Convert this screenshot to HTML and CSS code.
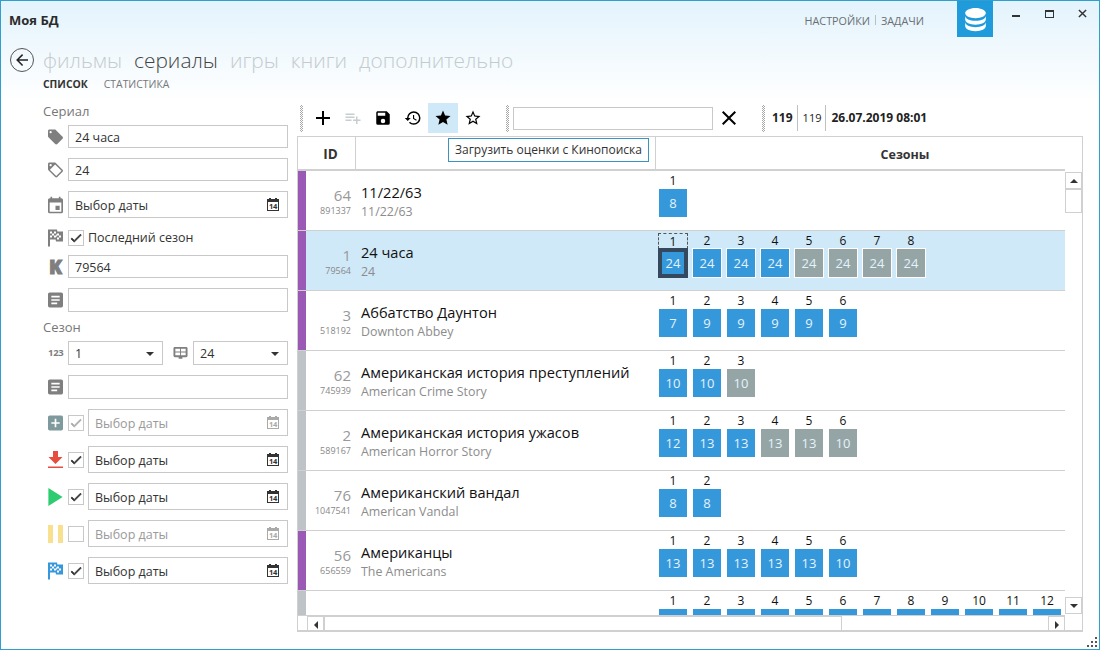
FILE: index.html
```html
<!DOCTYPE html>
<html lang="ru">
  <head>
    <meta charset="UTF-8" />
    <title>Моя БД</title>
    <link rel="stylesheet" href="styles.css">
  </head>
  <body>
    <svg class="defs" width="0" height="0">
      <symbol id="i-plus" viewBox="0 0 24 24"><path d="M19,13H13V19H11V13H5V11H11V5H13V11H19V13Z" /></symbol>
      <symbol id="i-listadd" viewBox="0 0 24 24"><path d="M14,10H2V12H14V10M14,6H2V8H14V6M18,14V10H16V14H12V16H16V20H18V16H22V14H18M2,16H10V14H2V16Z" /></symbol>
      <symbol id="i-save" viewBox="0 0 24 24"><path d="M15,9H5V5H15M12,19A3,3 0 0,1 9,16A3,3 0 0,1 12,13A3,3 0 0,1 15,16A3,3 0 0,1 12,19M17,3H5C3.89,3 3,3.9 3,5V19A2,2 0 0,0 5,21H19A2,2 0 0,0 21,19V7L17,3Z" /></symbol>
      <symbol id="i-history" viewBox="0 0 24 24"><path d="M13.5,8H12V13L16.28,15.54L17,14.33L13.5,12.25V8M13,3A9,9 0 0,0 4,12H1L4.96,16.03L9,12H6A7,7 0 0,1 13,5A7,7 0 0,1 20,12A7,7 0 0,1 13,19C11.07,19 9.32,18.21 8.06,16.94L6.64,18.36C8.27,20 10.5,21 13,21A9,9 0 0,0 22,12A9,9 0 0,0 13,3" /></symbol>
      <symbol id="i-star" viewBox="0 0 24 24"><path d="M12,17.27L18.18,21L16.54,13.97L22,9.24L14.81,8.62L12,2L9.19,8.62L2,9.24L7.45,13.97L5.82,21L12,17.27Z" /></symbol>
      <symbol id="i-starline" viewBox="0 0 24 24"><path d="M12,15.39L8.24,17.66L9.23,13.38L5.91,10.5L10.29,10.13L12,6.09L13.71,10.13L18.09,10.5L14.77,13.38L15.76,17.66M22,9.24L14.81,8.62L12,2L9.19,8.62L2,9.24L7.45,13.97L5.82,21L12,17.27L18.18,21L16.54,13.97L22,9.24Z" /></symbol>
      <symbol id="i-close" viewBox="0 0 24 24"><path d="M19,6.41L17.59,5L12,10.59L6.41,5L5,6.41L10.59,12L5,17.59L6.41,19L12,13.41L17.59,19L19,17.59L13.41,12L19,6.41Z" /></symbol>
      <symbol id="i-tag" viewBox="2 2 20 20"><path d="M5.5,7A1.5,1.5 0 0,1 4,5.5A1.5,1.5 0 0,1 5.5,4A1.5,1.5 0 0,1 7,5.5A1.5,1.5 0 0,1 5.5,7M21.41,11.58L12.41,2.58C12.05,2.22 11.55,2 11,2H4C2.89,2 2,2.89 2,4V11C2,11.55 2.22,12.05 2.59,12.41L11.58,21.41C11.95,21.77 12.45,22 13,22C13.55,22 14.05,21.77 14.41,21.41L21.41,14.41C21.78,14.05 22,13.55 22,13C22,12.44 21.77,11.94 21.41,11.58Z" /></symbol>
      <symbol id="i-tagline" viewBox="2 2 20 20"><path d="M5.5,7A1.5,1.5 0 0,0 7,5.5A1.5,1.5 0 0,0 5.5,4A1.5,1.5 0 0,0 4,5.5A1.5,1.5 0 0,0 5.5,7M21.41,11.58C21.77,11.94 22,12.44 22,13C22,13.55 21.78,14.05 21.41,14.41L14.41,21.41C14.05,21.77 13.55,22 13,22C12.45,22 11.95,21.77 11.58,21.41L2.59,12.42C2.22,12.05 2,11.55 2,11V4C2,2.89 2.89,2 4,2H11C11.55,2 12.05,2.22 12.41,2.58L21.41,11.58M13,20L20,13L11.5,4.5L4.5,11.5L13,20Z" /></symbol>
      <symbol id="i-calendar" viewBox="3 1 18 20"><path d="M19,19H5V8H19M16,1V3H8V1H6V3H5C3.89,3 3,3.89 3,5V19A2,2 0 0,0 5,21H19A2,2 0 0,0 21,19V5C21,3.89 20.1,3 19,3H18V1M17,12H12V17H17V12Z" /></symbol>
      <symbol id="i-note" viewBox="3 3 18 18"><path d="M14,17H7V15H14M17,13H7V11H17M17,9H7V7H17M19,3H5C3.89,3 3,3.89 3,5V19A2,2 0 0,0 5,21H19A2,2 0 0,0 21,19V5C21,3.89 20.1,3 19,3Z" /></symbol>
      <symbol id="i-plusbox" viewBox="3 3 18 18"><path d="M17,13H13V17H11V13H7V11H11V7H13V11H17M19,3H5C3.89,3 3,3.89 3,5V19A2,2 0 0,0 5,21H19A2,2 0 0,0 21,19V5C21,3.89 20.1,3 19,3Z" /></symbol>
      <symbol id="i-flag" viewBox="5 4 15 17"><path d="M14.4,6H20V16H13L12.6,14H7V21H5V4H14L14.4,6M14,14H16V12H18V10H16V8H14V10L13,8V6H11V8H9V6H7V8H9V10H7V12H9V10H11V12H13V10L14,12V14M11,10V8H13V10H11M14,10H16V12H14V10Z" /></symbol>
      <symbol id="i-check" viewBox="0 0 24 24"><path d="M21,7L9,19L3.5,13.5L4.91,12.09L9,16.17L19.59,5.59L21,7Z" /></symbol>
    </svg>

    <div class="window">
      <header class="titlebar">
        <div class="app-title">Моя БД</div>
        <div class="top-links"><span>НАСТРОЙКИ</span><i></i><span>ЗАДАЧИ</span></div>
        <div class="db-tile">
          <svg viewBox="0 0 24 24"><path d="M12,3C7.58,3 4,4.79 4,7C4,9.21 7.58,11 12,11C16.42,11 20,9.21 20,7C20,4.79 16.42,3 12,3M4,9V12C4,14.21 7.58,16 12,16C16.42,16 20,14.21 20,12V9C20,11.21 16.42,13 12,13C7.58,13 4,11.21 4,9M4,14V17C4,19.21 7.58,21 12,21C16.42,21 20,19.21 20,17V14C20,16.21 16.42,18 12,18C7.58,18 4,16.21 4,14Z" /></svg>
        </div>
        <div class="win-controls">
          <span class="win-min"></span>
          <span class="win-max"></span>
          <svg class="win-close" viewBox="0 0 10 10"><path d="M1 1L9 9M9 1L1 9" /></svg>
        </div>
      </header>

      <nav class="main-nav">
        <div class="back-btn">
          <svg viewBox="0 0 24 24"><path d="M20,11V13H8L13.5,18.5L12.08,19.92L4.16,12L12.08,4.08L13.5,5.5L8,11H20Z" /></svg>
        </div>
        <a>фильмы</a>
        <a class="active">сериалы</a>
        <a>игры</a>
        <a>книги</a>
        <a>дополнительно</a>
      </nav>
      <div class="sub-nav">
        <a class="active">СПИСОК</a>
        <a>СТАТИСТИКА</a>
      </div>

      <div class="content">
        <aside class="sidebar">
          <div class="group-title">Сериал</div>
          <div class="form-row h23">
            <svg class="icon gray"><use href="#i-tag" /></svg>
            <div class="field">24 часа</div>
          </div>
          <div class="form-row h23">
            <svg class="icon gray"><use href="#i-tagline" /></svg>
            <div class="field">24</div>
          </div>
          <div class="form-row h27">
            <svg class="icon gray"><use href="#i-calendar" /></svg>
            <div class="field date">Выбор даты<span class="cal">14</span></div>
          </div>
          <div class="form-row h15 last-season">
            <svg class="icon gray"><use href="#i-flag" /></svg>
            <div class="check on"><svg><use href="#i-check" /></svg></div>
            <span class="check-label">Последний сезон</span>
          </div>
          <div class="form-row h23">
            <span class="icon kp">K</span>
            <div class="field">79564</div>
          </div>
          <div class="form-row h24">
            <svg class="icon gray"><use href="#i-note" /></svg>
            <div class="field"></div>
          </div>

          <div class="group-title second">Сезон</div>
          <div class="form-row h24">
            <span class="icon num">123</span>
            <div class="field select">1<i class="caret"></i></div>
            <svg class="icon gray screen" viewBox="0 0 16 15"><path d="M2 1h12a1.500 1.500 0 0 1 1.500 1.500v8A1.500 1.500 0 0 1 14 12H10v1.500H6V12H2A1.500 1.500 0 0 1 .5 10.500v-8A1.500 1.500 0 0 1 2 1ZM2.500 3v3h5V3ZM8.500 3v3h5V3ZM2.500 7v3h5V7ZM8.500 7v3h5V7Z" /></svg>
            <div class="field select">24<i class="caret"></i></div>
          </div>
          <div class="form-row h24">
            <svg class="icon gray"><use href="#i-note" /></svg>
            <div class="field"></div>
          </div>
          <div class="form-row h27 faded">
            <svg class="icon slate"><use href="#i-plusbox" /></svg>
            <div class="check on"><svg><use href="#i-check" /></svg></div>
            <div class="field date">Выбор даты<span class="cal">14</span></div>
          </div>
          <div class="form-row h27">
            <svg class="icon red" viewBox="0 0 15 18"><path d="M5 0h5v6h4.500L7.500 13 .5 6H5ZM0 15.500h15V17H0Z" /></svg>
            <div class="check on"><svg><use href="#i-check" /></svg></div>
            <div class="field date">Выбор даты<span class="cal">14</span></div>
          </div>
          <div class="form-row h27">
            <svg class="icon green" viewBox="0 0 15 19"><path d="M0 0L15 9.500 0 19Z" /></svg>
            <div class="check on"><svg><use href="#i-check" /></svg></div>
            <div class="field date">Выбор даты<span class="cal">14</span></div>
          </div>
          <div class="form-row h27 faded">
            <svg class="icon yellow" viewBox="0 0 15 18"><path d="M0 0h5v18H0ZM10 0h5v18h-5Z" /></svg>
            <div class="check"></div>
            <div class="field date">Выбор даты<span class="cal">14</span></div>
          </div>
          <div class="form-row h27">
            <svg class="icon blue"><use href="#i-flag" /></svg>
            <div class="check on"><svg><use href="#i-check" /></svg></div>
            <div class="field date">Выбор даты<span class="cal">14</span></div>
          </div>
        </aside>

        <main class="list-area">
          <div class="toolbar">
            <i class="grip"></i>
            <div class="tool"><svg class="big"><use href="#i-plus" /></svg></div>
            <div class="tool muted"><svg><use href="#i-listadd" /></svg></div>
            <div class="tool"><svg><use href="#i-save" /></svg></div>
            <div class="tool"><svg><use href="#i-history" /></svg></div>
            <div class="tool hot"><svg><use href="#i-star" /></svg></div>
            <div class="tool"><svg><use href="#i-starline" /></svg></div>
            <i class="grip gap-left"></i>
            <div class="search"></div>
            <div class="tool clear"><svg class="big"><use href="#i-close" /></svg></div>
            <i class="grip gap-left2"></i>
            <b class="stat first">119</b>
            <span class="stat small">119</span>
            <b class="stat">26.07.2019 08:01</b>
          </div>
          <div class="tooltip">Загрузить оценки с Кинопоиска</div>

          <div class="grid">
            <div class="grid-head">
              <div class="col-id">ID</div>
              <div class="col-name"></div>
              <div class="col-seasons">Сезоны</div>
            </div>
            <div class="grid-middle">
              <div class="rows">
                <div class="row">
                  <i class="bar purple"></i>
                  <div class="ids"><span>64</span><small>891337</small></div>
                  <div class="names"><div>11/22/63</div><small>11/22/63</small></div>
                  <div class="seasons">
                    <div class="season"><span>1</span><b>8</b></div>
                  </div>
                </div>
                <div class="row selected">
                  <i class="bar purple"></i>
                  <div class="ids"><span>1</span><small>79564</small></div>
                  <div class="names"><div>24 часа</div><small>24</small></div>
                  <div class="seasons">
                    <div class="season current"><span>1</span><b>24</b></div>
                    <div class="season"><span>2</span><b>24</b></div>
                    <div class="season"><span>3</span><b>24</b></div>
                    <div class="season"><span>4</span><b>24</b></div>
                    <div class="season off"><span>5</span><b>24</b></div>
                    <div class="season off"><span>6</span><b>24</b></div>
                    <div class="season off"><span>7</span><b>24</b></div>
                    <div class="season off"><span>8</span><b>24</b></div>
                  </div>
                </div>
                <div class="row">
                  <i class="bar purple"></i>
                  <div class="ids"><span>3</span><small>518192</small></div>
                  <div class="names"><div>Аббатство Даунтон</div><small>Downton Abbey</small></div>
                  <div class="seasons">
                    <div class="season"><span>1</span><b>7</b></div>
                    <div class="season"><span>2</span><b>9</b></div>
                    <div class="season"><span>3</span><b>9</b></div>
                    <div class="season"><span>4</span><b>9</b></div>
                    <div class="season"><span>5</span><b>9</b></div>
                    <div class="season"><span>6</span><b>9</b></div>
                  </div>
                </div>
                <div class="row">
                  <i class="bar silver"></i>
                  <div class="ids"><span>62</span><small>745939</small></div>
                  <div class="names"><div>Американская история преступлений</div><small>American Crime Story</small></div>
                  <div class="seasons">
                    <div class="season"><span>1</span><b>10</b></div>
                    <div class="season"><span>2</span><b>10</b></div>
                    <div class="season off"><span>3</span><b>10</b></div>
                  </div>
                </div>
                <div class="row">
                  <i class="bar silver"></i>
                  <div class="ids"><span>2</span><small>589167</small></div>
                  <div class="names"><div>Американская история ужасов</div><small>American Horror Story</small></div>
                  <div class="seasons">
                    <div class="season"><span>1</span><b>12</b></div>
                    <div class="season"><span>2</span><b>13</b></div>
                    <div class="season"><span>3</span><b>13</b></div>
                    <div class="season off"><span>4</span><b>13</b></div>
                    <div class="season off"><span>5</span><b>13</b></div>
                    <div class="season off"><span>6</span><b>10</b></div>
                  </div>
                </div>
                <div class="row">
                  <i class="bar silver"></i>
                  <div class="ids"><span>76</span><small>1047541</small></div>
                  <div class="names"><div>Американский вандал</div><small>American Vandal</small></div>
                  <div class="seasons">
                    <div class="season"><span>1</span><b>8</b></div>
                    <div class="season"><span>2</span><b>8</b></div>
                  </div>
                </div>
                <div class="row">
                  <i class="bar purple"></i>
                  <div class="ids"><span>56</span><small>656559</small></div>
                  <div class="names"><div>Американцы</div><small>The Americans</small></div>
                  <div class="seasons">
                    <div class="season"><span>1</span><b>13</b></div>
                    <div class="season"><span>2</span><b>13</b></div>
                    <div class="season"><span>3</span><b>13</b></div>
                    <div class="season"><span>4</span><b>13</b></div>
                    <div class="season"><span>5</span><b>13</b></div>
                    <div class="season"><span>6</span><b>10</b></div>
                  </div>
                </div>
                <div class="row">
                  <i class="bar silver"></i>
                  <div class="ids"></div>
                  <div class="names"></div>
                  <div class="seasons">
                    <div class="season"><span>1</span><b></b></div>
                    <div class="season"><span>2</span><b></b></div>
                    <div class="season"><span>3</span><b></b></div>
                    <div class="season"><span>4</span><b></b></div>
                    <div class="season"><span>5</span><b></b></div>
                    <div class="season"><span>6</span><b></b></div>
                    <div class="season"><span>7</span><b></b></div>
                    <div class="season"><span>8</span><b></b></div>
                    <div class="season"><span>9</span><b></b></div>
                    <div class="season"><span>10</span><b></b></div>
                    <div class="season"><span>11</span><b></b></div>
                    <div class="season"><span>12</span><b></b></div>
                  </div>
                </div>
              </div>
              <div class="vscroll">
                <div class="sb-btn"><i class="tri up"></i></div>
                <div class="sb-thumb"></div>
                <div class="sb-fill"></div>
                <div class="sb-btn"><i class="tri down"></i></div>
              </div>
            </div>
            <div class="hscroll">
              <div class="sb-btn"><i class="tri left"></i></div>
              <div class="sb-thumb"></div>
              <div class="sb-fill"></div>
              <div class="sb-btn"><i class="tri right"></i></div>
            </div>
          </div>
        </main>
      </div>
      <svg class="resize-grip" viewBox="0 0 12 12"><path d="M9 1h2v2H9ZM5 5h2v2H5ZM9 5h2v2H9ZM1 9h2v2H1ZM5 9h2v2H5ZM9 9h2v2H9Z" /></svg>
    </div>
  </body>
</html>
```

FILE: styles.css
```css
* {
  box-sizing: border-box;
  margin: 0;
  padding: 0;
}

html,
body {
  width: 1100px;
  height: 650px;
  overflow: hidden;
}

body {
  font-family: "Open Sans", "Noto Sans", sans-serif;
  font-size: 12px;
  color: #222;
  background: #fff;
}

.defs {
  position: absolute;
}

.window {
  position: relative;
  width: 1100px;
  height: 650px;
  border: 1px solid #2f9fd0;
  background: linear-gradient(180deg, #e3f3fc 0, #ffffff 100px);
  overflow: hidden;
}

/* title bar */
.titlebar {
  display: flex;
  align-items: flex-start;
  height: 36px;
  padding-left: 8px;
}

.app-title {
  height: 36px;
  padding-top: 1px;
  font-size: 13px;
  font-weight: 700;
  color: #2b2b2b;
  line-height: 36px;
  flex: 1;
}

.top-links {
  display: flex;
  align-items: center;
  height: 38px;
  font-size: 10.800px;
  color: #6a6f73;
}

.top-links i {
  width: 1px;
  height: 10px;
  margin: 0 5px;
  background: #b9c0c4;
}

.db-tile {
  width: 36px;
  height: 36px;
  margin-left: 33px;
  background: #1f9bdc;
  display: flex;
  align-items: center;
  justify-content: center;
}

.db-tile svg {
  width: 31px;
  height: 31px;
  fill: #fff;
}

.win-controls {
  display: flex;
  align-items: center;
  width: 106px;
  height: 25px;
  padding-left: 19px;
}

.win-min {
  width: 8px;
  height: 2px;
  margin-top: 4px;
  background: #333;
}

.win-max {
  width: 9px;
  height: 8px;
  margin-left: 25px;
  border: 1px solid #333;
  border-top-width: 2px;
}

.win-close {
  width: 9px;
  height: 9px;
  margin-left: 24px;
  stroke: #333;
  stroke-width: 1.600;
  fill: none;
}

/* section navigation */
.main-nav {
  display: flex;
  align-items: center;
  height: 30px;
  margin-top: 8px;
  padding-left: 9px;
  font-size: 20.900px;
  font-weight: 300;
  color: #c3cbce;
}

.main-nav a {
  margin-right: 12px;
}

.main-nav a.active {
  color: #444;
}

.back-btn {
  width: 24px;
  height: 24px;
  margin-right: 9px;
  border: 1px solid #555;
  border-radius: 50%;
  display: flex;
  align-items: center;
  justify-content: center;
}

.back-btn svg {
  width: 18px;
  height: 18px;
  fill: #222;
}

.sub-nav {
  display: flex;
  gap: 16px;
  height: 20px;
  padding-left: 42px;
  font-size: 10.400px;
  line-height: 18px;
  color: #777;
}

.sub-nav .active {
  font-weight: 700;
  color: #333;
}

.content {
  display: flex;
  height: 546px;
  padding-top: 8px;
}

/* left form */
.sidebar {
  width: 296px;
  flex: none;
  padding-left: 42px;
  display: flex;
  flex-direction: column;
  gap: 10px;
}

.group-title {
  height: 12px;
  margin-top: 2px;
  margin-bottom: -2px;
  font-size: 13px;
  line-height: 12px;
  color: #777;
}

.group-title.second {
  margin-top: -1px;
  margin-bottom: -2px;
}

.form-row {
  display: flex;
  align-items: center;
  width: 245px;
  padding-left: 5px;
}

.last-season {
  margin-top: 2px;
}

.h15 { height: 15px; }
.h23 { height: 23px; }
.h24 { height: 24px; }
.h27 { height: 27px; }

.icon {
  width: 15px;
  height: 18px;
  flex: none;
  margin-right: 5px;
  overflow: visible;
}

.icon.gray { fill: #7f7f7f; }
.icon.slate { fill: #7f9a9c; }
.icon.red { fill: #e74c3c; }
.icon.green { fill: #2ecc71; }
.icon.yellow { fill: #f9e08f; }
.icon.blue { fill: #3498db; }

.kp {
  font-size: 19px;
  font-weight: 800;
  line-height: 18px;
  color: #7f7f7f;
  text-align: center;
  -webkit-text-stroke: 1px #7f7f7f;
}

.num {
  font-size: 9.500px;
  font-weight: 700;
  line-height: 18px;
  color: #7f7f7f;
  letter-spacing: -0.300px;
}

.icon.screen {
  margin: 0 5px 0 10px;
}

.field {
  flex: 1;
  height: 100%;
  display: flex;
  align-items: center;
  justify-content: space-between;
  padding: 1px 6px 0;
  border: 1px solid #c8c8c8;
  background: #fff;
  font-size: 12.500px;
  color: #333;
}

/* small tear-off calendar on date inputs */
.cal {
  position: relative;
  width: 12px;
  height: 12px;
  margin-right: 2px;
  border: 1px solid #333;
  border-top-width: 3px;
  font-size: 7.500px;
  font-weight: 700;
  line-height: 9px;
  text-align: center;
  letter-spacing: -0.300px;
  color: #333;
}

.cal::before,
.cal::after {
  content: "";
  position: absolute;
  top: -4px;
  width: 2px;
  height: 2px;
  background: #333;
}

.cal::before { left: 1px; }
.cal::after { right: 1px; }

.field.select {
  width: 95px;
  flex: none;
  padding-right: 8px;
}

.caret {
  width: 0;
  height: 0;
  border-left: 4px solid transparent;
  border-right: 4px solid transparent;
  border-top: 4px solid #333;
}

.check {
  width: 16px;
  height: 16px;
  flex: none;
  margin-right: 4px;
  border: 1px solid #c8c8c8;
  background: #fff;
  display: flex;
  align-items: center;
  justify-content: center;
}

.check svg {
  width: 14px;
  height: 14px;
  fill: #333;
  stroke: #333;
  stroke-width: 1.500;
}

.check-label {
  font-size: 12.500px;
  color: #333;
}

.faded .check svg {
  fill: #aaa;
  stroke: #aaa;
}

.faded .field {
  color: #9a9a9a;
}

.faded .cal {
  color: #aaa;
  border-color: #aaa;
}

.faded .cal::before,
.faded .cal::after {
  background: #aaa;
}

/* list side */
.list-area {
  position: relative;
  width: 787px;
  flex: none;
}

.toolbar {
  display: flex;
  align-items: center;
  height: 30px;
  padding-left: 3px;
}

.grip {
  width: 3px;
  height: 27px;
  flex: none;
  margin-right: 5px;
  background: repeating-conic-gradient(#a8a8a8 0 25%, #fff 0 50%) 0 0 / 2px 2px;
}

.grip.gap-left {
  margin-left: 18px;
  margin-right: 4px;
}

.grip.gap-left2 {
  margin-left: 18px;
  margin-right: 7px;
}

.tool {
  width: 30px;
  height: 30px;
  flex: none;
  display: flex;
  align-items: center;
  justify-content: center;
}

.tool svg {
  width: 18px;
  height: 18px;
  fill: #000;
}

.tool svg.big {
  width: 24px;
  height: 24px;
}

.tool.muted svg {
  fill: #c8cdd0;
}

.tool.hot {
  background: #cfe9f8;
}

.search {
  width: 200px;
  height: 23px;
  flex: none;
  border: 1px solid #c8c8c8;
  background: #fff;
}

.tool.clear {
  margin-left: 1px;
}

.stat {
  padding: 0 5px;
  line-height: 26px;
  border-left: 1px solid #c0c0c0;
  font-size: 12px;
  color: #222;
}

.stat.small {
  padding-right: 4px;
  font-size: 11px;
}

.stat.first {
  border-left: 0;
  padding: 0 4px 0 0;
}

.tooltip {
  position: absolute;
  left: 151px;
  top: 35px;
  z-index: 5;
  height: 24px;
  width: 201px;
  border: 1px solid #3b93bf;
  background: #fff;
  font-size: 12px;
  line-height: 22px;
  text-align: center;
  white-space: nowrap;
  color: #333;
}

.grid {
  width: 786px;
  height: 496px;
  margin-top: 3px;
  border: 1px solid #d0d0d0;
  border-bottom-width: 2px;
  background: #fff;
  overflow: hidden;
}

.grid-head {
  display: flex;
  height: 34px;
  border-bottom: 2px solid #d0d0d0;
  width: 767px;
  font-size: 12.500px;
  font-weight: 700;
  line-height: 35px;
  color: #333;
}

.grid-head > div {
  flex: none;
  text-align: center;
}

.grid-head .col-id {
  width: 58px;
  border-right: 1px solid #d0d0d0;
  padding-left: 8px;
  font-size: 13.500px;
}

.grid-head .col-name {
  width: 300px;
  border-right: 1px solid #d0d0d0;
}

.grid-head .col-seasons {
  width: 498px;
}

.grid-middle {
  display: flex;
  height: 444px;
}

.rows {
  width: 767px;
  flex: none;
  overflow: hidden;
}

.row {
  display: flex;
  height: 60px;
  border-bottom: 1px solid #d0d0d0;
}

.row.selected {
  background: #cfe9f8;
}

.bar {
  width: 8px;
  flex: none;
}

.bar.purple { background: #9b59b6; }
.bar.silver { background: #bdc3c7; }

.ids {
  width: 45px;
  flex: none;
  padding-top: 14px;
  text-align: right;
  color: #999;
}

.ids span {
  display: block;
  font-size: 15px;
  line-height: 20px;
}

.ids small {
  display: block;
  font-size: 9px;
  line-height: 12px;
  color: #888;
}

.names {
  width: 298px;
  flex: none;
  padding: 11px 0 0 10px;
  font-size: 14.600px;
  line-height: 20px;
  color: #111;
  white-space: nowrap;
}

.names small {
  display: block;
  margin-top: 1px;
  font-size: 12.400px;
  line-height: 18px;
  color: #8c8c8c;
}

.seasons {
  display: flex;
  flex: none;
  gap: 6px;
  padding: 2px 0 0 10px;
}

.season {
  width: 28px;
  flex: none;
  text-align: center;
}

.season span {
  display: block;
  height: 16px;
  font-size: 12px;
  line-height: 16px;
  color: #111;
}

.season b {
  display: block;
  width: 28px;
  height: 28px;
  font-size: 13px;
  font-weight: 400;
  line-height: 28px;
  color: #e4f2fb;
  background: #3498db;
}

.season.off b {
  background: #95a5a6;
}

.selected .season b {
  outline: 1px solid #fff;
}

.selected .season.current span {
  margin: 0 -1px;
  border: 1px dashed #555;
  border-bottom: 0;
  line-height: 15px;
}

.selected .season.current b {
  border: 3px solid #34495e;
  outline: 1px solid #34495e;
  line-height: 22px;
}

/* scroll bars */
.vscroll {
  width: 17px;
  flex: none;
  display: flex;
  flex-direction: column;
  padding-top: 1px;
}

.hscroll {
  display: flex;
  width: 767px;
  height: 17px;
  padding-left: 9px;
  border-top: 1px solid #d0d0d0;
}

.sb-btn {
  width: 17px;
  height: 17px;
  flex: none;
  border: 1px solid #d0d0d0;
  background: #fff;
  display: flex;
  align-items: center;
  justify-content: center;
}

.sb-thumb {
  flex: none;
  border: 1px solid #d0d0d0;
  background: #fff;
}

.vscroll .sb-thumb {
  width: 17px;
  height: 24px;
}

.hscroll .sb-thumb {
  width: 518px;
  height: 17px;
}

.sb-fill {
  flex: 1;
}

.vscroll .sb-btn:last-child {
  margin-bottom: 1px;
}

.tri {
  width: 0;
  height: 0;
  border: 4px solid transparent;
}

.tri.up {
  border-top: 0;
  border-bottom-color: #333;
}

.tri.down {
  border-bottom: 0;
  border-top-color: #333;
}

.tri.left {
  border-left: 0;
  border-right-color: #333;
}

.tri.right {
  border-right: 0;
  border-left-color: #333;
}

.resize-grip {
  position: absolute;
  right: 1px;
  bottom: 1px;
  width: 12px;
  height: 12px;
  fill: #555;
}
```
